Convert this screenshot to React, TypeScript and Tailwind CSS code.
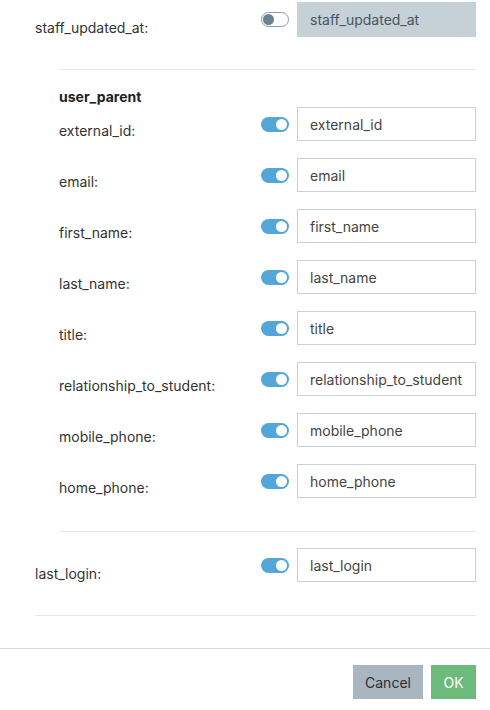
import * as React from 'react';

type Field = { name: string; on: boolean; disabled?: boolean };

const parentFields: Field[] = [
  { name: 'external_id', on: true },
  { name: 'email', on: true },
  { name: 'first_name', on: true },
  { name: 'last_name', on: true },
  { name: 'title', on: true },
  { name: 'relationship_to_student', on: true },
  { name: 'mobile_phone', on: true },
  { name: 'home_phone', on: true },
];

function Toggle({ on }: { on: boolean }) {
  if (on) {
    return (
      <div className="flex h-[15px] w-[28px] shrink-0 items-center justify-end rounded-full bg-[#52a6d8] pr-[2px]">
        <div className="h-[11px] w-[11px] rounded-full bg-white" />
      </div>
    );
  }
  return (
    <div className="flex h-[15px] w-[28px] shrink-0 items-center rounded-full border border-[#8a9aa6] bg-white pl-[1px]">
      <div className="h-[11px] w-[11px] rounded-full bg-[#6a8294]" />
    </div>
  );
}

function FieldRow({ field, labelPad }: { field: Field; labelPad: string }) {
  return (
    <div className="flex items-start">
      <div className={`flex-1 text-[14px] leading-[20px] text-[#333] ${labelPad}`}>{field.name}:</div>
      <div className="flex h-[34px] items-center">
        <Toggle on={field.on} />
      </div>
      <div
        className={
          field.disabled
            ? 'ml-[8px] flex h-[35px] w-[179px] items-center bg-[#c5d0d7] px-[13px] text-[14px] text-[#4a5560]'
            : 'ml-[8px] flex h-[34px] w-[179px] items-center border border-[#c9d1d6] bg-white px-[12px] text-[14px] text-[#444]'
        }
      >
        {field.name}
      </div>
    </div>
  );
}

export default function App() {
  return (
    <div className="h-[710px] w-[490px] overflow-hidden bg-white" style={{ fontFamily: 'Inter, "Noto Sans", sans-serif' }}>
      <div className="pl-[35px] pr-[14px] pt-[2px]">
        <FieldRow field={{ name: 'staff_updated_at', on: false, disabled: true }} labelPad="pt-[16px]" />
        <div className="ml-[24px] mt-[31px] border-t border-[#e6e6e6]" />
        <div className="ml-[24px] pt-[17px]">
          <div className="text-[14px] font-bold leading-[20px] text-[#222]">user_parent</div>
          <div className="flex flex-col gap-[17px]">
            {parentFields.map((f) => (
              <FieldRow key={f.name} field={f} labelPad="pt-[14px]" />
            ))}
          </div>
          <div className="mt-[33px] border-t border-[#e6e6e6]" />
        </div>
        <div className="pt-[16px]">
          <FieldRow field={{ name: 'last_login', on: true }} labelPad="pt-[16px]" />
        </div>
        <div className="mt-[31px] border-t border-[#e6e6e6]" />
      </div>
      <div className="mt-[32px] flex justify-end gap-[8px] border-t border-[#d9d9d9] pr-[14px] pt-[16px]">
        <button className="h-[34px] w-[70px] bg-[#a9b6c0] text-[14px] text-[#2b2f33]">Cancel</button>
        <button className="h-[34px] w-[45px] bg-[#6cbb7a] text-[14px] text-white">OK</button>
      </div>
    </div>
  );
}
